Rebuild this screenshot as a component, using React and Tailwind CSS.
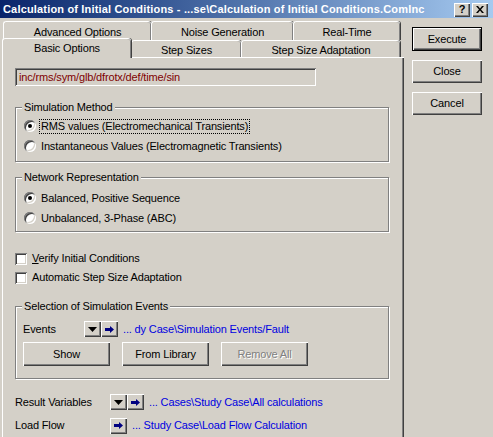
import React from 'react';

const raised = 'bg-[#d4d0c8] shadow-[inset_1px_1px_#fff,inset_-1px_-1px_#404040,inset_-2px_-2px_#808080]';
const sunken = 'shadow-[inset_1px_1px_#808080,inset_-1px_-1px_#fff,inset_2px_2px_#404040,inset_-2px_-2px_#d4d0c8]';

function Button({ children, className = '', disabled }) {
  return (
    <div className={`${raised} flex items-center justify-center ${className}`}>
      <span className={disabled ? 'text-[#808080] [text-shadow:1px_1px_0_#fff]' : 'text-black'}>{children}</span>
    </div>
  );
}

function DropBtn() {
  return (
    <div className={`${raised} w-[17px] h-[16px] flex items-center justify-center`}>
      <svg width="9" height="5" viewBox="0 0 9 5"><path d="M0 0h9L4.5 5z" fill="#000" /></svg>
    </div>
  );
}

function ArrowBtn() {
  return (
    <div className={`${raised} w-[17px] h-[16px] flex items-center justify-center`}>
      <svg width="9" height="7" viewBox="0 0 9 7"><path d="M0 2h5V0l4 3.5L5 7V5H0z" fill="#000080" /></svg>
    </div>
  );
}

function Radio({ checked, children, focus }) {
  return (
    <div className="flex items-center h-[20px]">
      <div className={`w-[12px] h-[12px] rounded-full bg-white ${sunken} flex items-center justify-center ml-[8px]`}>
        {checked && <div className="w-[4px] h-[4px] rounded-full bg-black" />}
      </div>
      <span className={`ml-[3px] px-[1px] ${focus ? 'border border-dotted border-black' : 'border border-transparent'}`}>{children}</span>
    </div>
  );
}

function Check({ children }) {
  return (
    <div className="flex items-center h-[19px]">
      <div className={`w-[12px] h-[12px] bg-white ${sunken}`} />
      <span className="ml-[5px]">{children}</span>
    </div>
  );
}

function Group({ label, className = '', children }) {
  return (
    <div className={`relative border border-[#808080] shadow-[inset_1px_1px_#fff,1px_1px_#fff] w-[374px] ${className}`}>
      <span className="absolute left-[6px] -top-[8px] bg-[#d4d0c8] px-[2px] leading-[14px]">{label}</span>
      {children}
    </div>
  );
}

function Tab({ children, className = '' }) {
  return (
    <div className={`flex items-start justify-center bg-[#d4d0c8] border-l border-t border-white rounded-tl-[3px] rounded-tr-[3px] shadow-[inset_-1px_0_#808080,1px_0_#404040] ${className}`}>
      {children}
    </div>
  );
}

export default function App() {
  return (
    <div className="w-[493px] h-[437px] bg-[#d4d0c8] overflow-hidden text-[11px] leading-[13px] tracking-[-0.15px] text-black" style={{ fontFamily: '"Liberation Sans", Arial, sans-serif' }}>
      <div className="h-[18px] flex items-center pl-[3px] pr-[5px] bg-gradient-to-r from-[#0a246a] to-[#a6caf0]">
        <span className="text-white font-bold flex-1 whitespace-nowrap tracking-[0.17px]">Calculation of Initial Conditions - ...se\Calculation of Initial Conditions.ComInc</span>
        <div className="flex gap-[2px] mt-[1px]">
          <div className={`${raised} w-[16px] h-[14px] flex items-center justify-center font-bold text-[11px]`}>?</div>
          <div className={`${raised} w-[16px] h-[14px] flex items-center justify-center`}>
            <svg width="8" height="7" viewBox="0 0 8 7"><path d="M0 0h2l2 2.5L6 0h2L5 3.5 8 7H6L4 4.5 2 7H0l3-3.5z" fill="#000" /></svg>
          </div>
        </div>
      </div>

      <div className="flex">
        <div className="ml-[2px] w-[402px]">
          <div className="flex mt-[3px] h-[19px] pl-[1px]">
            <Tab className="w-[148px] pt-[4px]">Advanced Options</Tab>
            <Tab className="w-[142px] pt-[4px]">Noise Generation</Tab>
            <Tab className="w-[107px] pt-[4px]">Real-Time</Tab>
          </div>
          <div className="relative flex items-end -mt-[2px] h-[19px]">
            <Tab className="relative z-10 w-[129px] h-[20px] -mb-[1px] pt-[3px]">Basic Options</Tab>
            <Tab className="w-[110px] h-[17px] pt-[3px]">Step Sizes</Tab>
            <Tab className="w-[159px] h-[17px] pt-[3px]">Step Size Adaptation</Tab>
          </div>
          <div className="h-[380px] border-l border-t border-white shadow-[inset_-1px_0_#404040,inset_-2px_0_#808080] pl-[12px] pt-[10px]">
            <div className={`w-[301px] h-[18px] bg-[#d4d0c8] ${sunken} flex items-center pl-[4px] text-[#800000]`}>inc/rms/sym/glb/dfrotx/def/time/sin</div>

            <Group label="Simulation Method" className="mt-[21px] h-[55px] pt-[8px]">
              <Radio checked focus>RMS values (Electromechanical Transients)</Radio>
              <Radio>Instantaneous Values (Electromagnetic Transients)</Radio>
            </Group>

            <Group label="Network Representation" className="mt-[15px] h-[55px] pt-[10px]">
              <Radio checked>Balanced, Positive Sequence</Radio>
              <Radio>Unbalanced, 3-Phase (ABC)</Radio>
            </Group>

            <div className="mt-[17px]">
              <Check><span className="underline">V</span>erify Initial Conditions</Check>
              <Check>Automatic Step Size Adaptation</Check>
            </div>

            <Group label="Selection of Simulation Events" className="mt-[19px] h-[73px] pt-[14px] pl-[7px]">
              <div className="flex items-center h-[16px]">
                <span className="w-[61px]">Events</span>
                <DropBtn />
                <ArrowBtn />
                <span className="ml-[5px] text-[#0000e0]">... dy Case\Simulation Events/Fault</span>
              </div>
              <div className="flex gap-[12px] mt-[5px]">
                <Button className="w-[87px] h-[24px]">Show</Button>
                <Button className="w-[87px] h-[24px]">From Library</Button>
                <Button className="w-[87px] h-[24px]" disabled>Remove All</Button>
              </div>
            </Group>

            <div className="flex items-center h-[16px] mt-[15px]">
              <span className="w-[95px]">Result Variables</span>
              <DropBtn />
              <ArrowBtn />
              <span className="ml-[5px] text-[#0000e0]">... Cases\Study Case\All calculations</span>
            </div>
            <div className="flex items-center h-[17px] mt-[7px]">
              <span className="w-[95px]">Load Flow</span>
              <ArrowBtn />
              <span className="ml-[5px] text-[#0000e0]">... Study Case\Load Flow Calculation</span>
            </div>
          </div>
        </div>

        <div className="flex flex-col gap-[9px] ml-[8px] mt-[9px]">
          <div className="w-[70px] h-[24px] border border-black">
            <Button className="w-full h-full">Execute</Button>
          </div>
          <Button className="w-[70px] h-[23px]">Close</Button>
          <Button className="w-[70px] h-[23px]">Cancel</Button>
        </div>
      </div>
    </div>
  );
}
